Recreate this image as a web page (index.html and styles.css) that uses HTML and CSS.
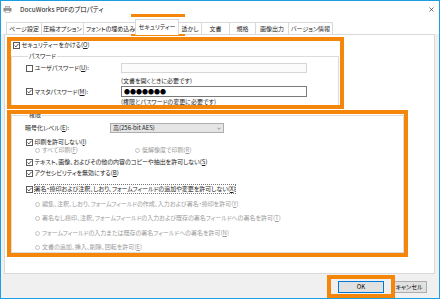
FILE: index.html
```html
<!DOCTYPE html>
<html lang="ja">
<head>
<meta charset="utf-8">
<title>DocuWorks PDFのプロパティ</title>
<link rel="stylesheet" href="styles.css">
</head>
<body>
<div class="window">
  <div class="titlebar">
    <svg class="app-icon" viewBox="0 0 9 7"><rect x="0.5" y="2" width="8" height="3.5" fill="#8c8c8c"/><rect x="2.2" y="0.4" width="4.6" height="2" fill="#d8d8d8" stroke="#8c8c8c" stroke-width="0.5"/><rect x="2.2" y="4.3" width="4.6" height="2.4" fill="#fff" stroke="#8c8c8c" stroke-width="0.5"/></svg>
    <span class="title">DocuWorks PDFのプロパティ</span>
    <svg class="close" viewBox="0 0 5 5"><path d="M0.5 0.5L4.5 4.5M4.5 0.5L0.5 4.5" stroke="#333" stroke-width="0.7" fill="none"/></svg>
  </div>
  <div class="tabs">
    <div class="tab w-page">ページ設定</div>
    <div class="tab w-comp">圧縮オプション</div>
    <div class="tab w-font">フォントの埋め込み</div>
    <div class="tab active">セキュリティー</div>
    <div class="tab w-mark">透かし</div>
    <div class="tab w-doc">文書</div>
    <div class="tab w-std">規格</div>
    <div class="tab w-img">画像出力</div>
    <div class="tab w-ver">バージョン情報</div>
  </div>
  <div class="panel">
    <div class="check sec-row"><svg class="box" viewBox="0 0 7 7"><rect x="0.5" y="0.5" width="6" height="6" fill="#fff" stroke="#5a5a5a"/><path d="M1.5 3.5L2.9 4.9L5.5 1.9" stroke="#222" stroke-width="0.8" fill="none"/></svg>セキュリティーをかける(<u>O</u>)</div>
    <fieldset class="group group-pw">
      <legend>パスワード</legend>
      <div class="pw-row r1">
        <div class="check pw-label"><svg class="box" viewBox="0 0 7 7"><rect x="0.5" y="0.5" width="6" height="6" fill="#fff" stroke="#5a5a5a"/></svg>ユーザパスワード(<u>U</u>):</div>
        <div class="input input-off"></div>
      </div>
      <div class="note n1">(文書を開くときに必要です)</div>
      <div class="pw-row r2">
        <div class="check pw-label"><svg class="box" viewBox="0 0 7 7"><rect x="0.5" y="0.5" width="6" height="6" fill="#fff" stroke="#5a5a5a"/><path d="M1.5 3.5L2.9 4.9L5.5 1.9" stroke="#222" stroke-width="0.8" fill="none"/></svg>マスタパスワード(<u>M</u>):</div>
        <div class="input">●●●●●●●</div>
      </div>
      <div class="note n2">(権限とパスワードの変更に必要です)</div>
    </fieldset>
    <fieldset class="group group-perm">
      <legend>権限</legend>
      <div class="enc-row">
        <span class="enc-label">暗号化レベル(<u>E</u>):</span>
        <div class="select"><span>高(256-bit AES)</span><svg class="chev" viewBox="0 0 5 3"><path d="M0.5 0.5L2.5 2.5L4.5 0.5" stroke="#555" stroke-width="0.7" fill="none"/></svg></div>
      </div>
      <div class="check prow p-print"><svg class="box" viewBox="0 0 7 7"><rect x="0.5" y="0.5" width="6" height="6" fill="#fff" stroke="#5a5a5a"/><path d="M1.5 3.5L2.9 4.9L5.5 1.9" stroke="#222" stroke-width="0.8" fill="none"/></svg>印刷を許可しない(<u>I</u>)</div>
      <div class="prow sub-radios">
        <div class="opt off opt-all"><span class="radio"></span>すべて印刷(<u>F</u>)</div>
        <div class="opt off"><span class="radio"></span>低解像度で印刷(<u>R</u>)</div>
      </div>
      <div class="check prow p-copy"><svg class="box" viewBox="0 0 7 7"><rect x="0.5" y="0.5" width="6" height="6" fill="#fff" stroke="#5a5a5a"/><path d="M1.5 3.5L2.9 4.9L5.5 1.9" stroke="#222" stroke-width="0.8" fill="none"/></svg>テキスト、画像、およびその他の内容のコピーや抽出を許可しない(<u>S</u>)</div>
      <div class="check prow p-acc"><svg class="box" viewBox="0 0 7 7"><rect x="0.5" y="0.5" width="6" height="6" fill="#fff" stroke="#5a5a5a"/><path d="M1.5 3.5L2.9 4.9L5.5 1.9" stroke="#222" stroke-width="0.8" fill="none"/></svg>アクセシビリティを無効にする(<u>B</u>)</div>
      <div class="check prow p-sign"><svg class="box" viewBox="0 0 7 7"><rect x="0.5" y="0.5" width="6" height="6" fill="#fff" stroke="#5a5a5a"/><path d="M1.5 3.5L2.9 4.9L5.5 1.9" stroke="#222" stroke-width="0.8" fill="none"/></svg><span class="focus">署名・捺印および注釈、しおり、フォームフィールドの追加や変更を許可しない(<u>X</u>)</span></div>
      <div class="opt off prow sub p-y"><span class="radio"></span>編集、注釈、しおり、フォームフィールドの作成、入力および署名・捺印を許可(<u>Y</u>)</div>
      <div class="opt off prow sub p-t"><span class="radio"></span>署名なし捺印、注釈、フォームフィールドの入力および既存の署名フィールドへの署名を許可(<u>T</u>)</div>
      <div class="opt off prow sub p-n"><span class="radio"></span>フォームフィールドの入力または既存の署名フィールドへの署名を許可(<u>N</u>)</div>
      <div class="opt off prow sub p-e"><span class="radio"></span>文書の追加、挿入、削除、回転を許可(<u>E</u>)</div>
    </fieldset>
  </div>
  <div class="footer">
    <button class="btn ok">OK</button>
    <button class="btn cancel">キャンセル</button>
  </div>
</div>
<div class="hl hl-tab"></div>
<div class="hl hl-pw"></div>
<div class="hl hl-perm"></div>
<div class="hl hl-ok"></div>
</body>
</html>
```
FILE: styles.css
```css
* { box-sizing: border-box; }
html, body { margin: 0; padding: 0; }
body {
  width: 440px;
  height: 299px;
  position: relative;
  overflow: hidden;
  background: #fff;
  color: #1c1c1c;
  font-family: "Noto Sans CJK JP", "Noto Sans", sans-serif;
  font-size: 6px;
  line-height: 8px;
  font-feature-settings: "palt";
}
u { text-decoration-thickness: 0.5px; text-underline-offset: 0.5px; }

.window {
  width: 440px;
  height: 299px;
  border: 1px solid #1b9fe2;
  background: #f0f0f0;
  display: flex;
  flex-direction: column;
}

.titlebar {
  height: 16px;
  flex: none;
  background: #fff;
  display: flex;
  align-items: center;
  padding: 0 5px 0 2px;
}
.app-icon { width: 9px; height: 7px; margin-right: 8px; flex: none; }
.title { flex: 1; font-size: 6.5px; color: #111; }
.close { width: 5px; height: 5px; flex: none; }

.tabs {
  height: 17px;
  flex: none;
  background: #fff;
  display: flex;
  align-items: flex-end;
  padding-left: 5px;
  position: relative;
  z-index: 1;
}
.tab {
  height: 12px;
  padding: 0;
  border: 1px solid #d9d9d9;
  border-bottom: none;
  margin-right: -1px;
  background: #fff;
  display: flex;
  align-items: center;
  justify-content: center;
  white-space: nowrap;
  flex: none;
}
.w-page { width: 36px; }
.w-comp { width: 43px; }
.w-font { width: 55px; }
.w-mark { width: 24px; }
.w-doc { width: 29px; }
.w-std { width: 27px; }
.w-img { width: 34px; }
.w-ver { width: 45px; }
.tab.active {
  width: 44px;
  height: 16px;
  margin: 0 -1px -1px -2px;
  padding-bottom: 2px;
  position: relative;
  z-index: 2;
}

.panel {
  flex: 1;
  margin: 0 4px 0 3px;
  background: #fff;
  border: 1px solid #d9d9d9;
  padding: 5px 0 0 8px;
}

.check { display: flex; align-items: center; white-space: nowrap; }
.box {
  width: 7px;
  height: 7px;
  margin-right: 1.5px;
  flex: none;
}
.sec-row { height: 10px; }

.group {
  border: 1px solid #dcdcdc;
  margin: 2px 0 0 -2px;
  padding: 0;
  min-width: 0;
}
.group legend {
  font-size: 6px;
  line-height: 8px;
  padding: 0 1px;
  margin-left: 2px;
}
.group-pw { width: 328px; padding: 0 0 0 14px; }
.group-perm { width: 393px; margin-top: 4px; padding: 0 0 1px 14px; }

.pw-row { display: flex; align-items: center; }
.pw-label { width: 95px; }
.r1 { height: 10px; margin-top: 3px; }
.r2 { height: 11px; margin-top: 1px; }
.input {
  width: 186px;
  height: 100%;
  border: 1px solid #7a7a7a;
  background: #fff;
  padding-left: 2px;
  display: flex;
  align-items: center;
  font-size: 6px;
  color: #000;
}
.input-off { border-color: #d6d6d6; background: #fbfbfb; }
.note { height: 8px; margin-left: 95px; }
.n1 { margin-top: 4px; }
.n2 { margin-top: 1px; }

.enc-row { display: flex; align-items: center; height: 10px; margin-top: 4px; margin-left: -1px; }
.enc-label { width: 85px; }
.select {
  width: 114px;
  height: 10px;
  border: 1px solid #adadad;
  background: #e5e5e5;
  padding: 0 2px 0 2px;
  display: flex;
  align-items: center;
  justify-content: space-between;
}
.chev { width: 4px; height: 3px; }

.prow { height: 8px; }
.p-print { margin-top: 5px; }
.sub-radios { display: flex; align-items: center; padding-left: 9px; }
.opt { display: flex; align-items: center; white-space: nowrap; }
.opt-all { width: 100px; }
.off { color: #9a9a9a; }
.radio {
  width: 5px;
  height: 5px;
  border-radius: 50%;
  border: 1px solid #c2c2c2;
  background: #fff;
  margin-right: 2px;
  flex: none;
}
.p-copy { margin-top: 4px; }
.p-acc { margin-top: 3px; }
.p-sign { margin-top: 8px; }
.focus { outline: 1px dotted #777; outline-offset: 0; }
.sub { padding-left: 9px; }
.p-y { margin-top: 7px; }
.p-t { margin-top: 6px; }
.p-n { margin-top: 7px; }
.p-e { margin-top: 6px; }

.footer {
  height: 24px;
  flex: none;
  display: flex;
  justify-content: flex-end;
  align-items: flex-start;
  padding: 7px 12px 0 0;
}
.btn {
  height: 12px;
  font: inherit;
  font-size: 6px;
  line-height: 8px;
  color: #000;
  background: #e1e1e1;
  border: 1px solid #adadad;
  padding: 0;
}
.ok { width: 46px; border-color: #0078d7; margin-right: 7px; }
.cancel { width: 36px; }

.hl {
  position: absolute;
  border: 4px solid #f5860c;
  pointer-events: none;
}
.hl-tab { left: 131px; top: 14px; width: 54px; height: 22px; }
.hl-pw { left: 7px; top: 37px; width: 337px; height: 72px; }
.hl-perm { left: 7px; top: 110px; width: 401px; height: 147px; }
.hl-ok { left: 327px; top: 275px; width: 68px; height: 23px; }
```
